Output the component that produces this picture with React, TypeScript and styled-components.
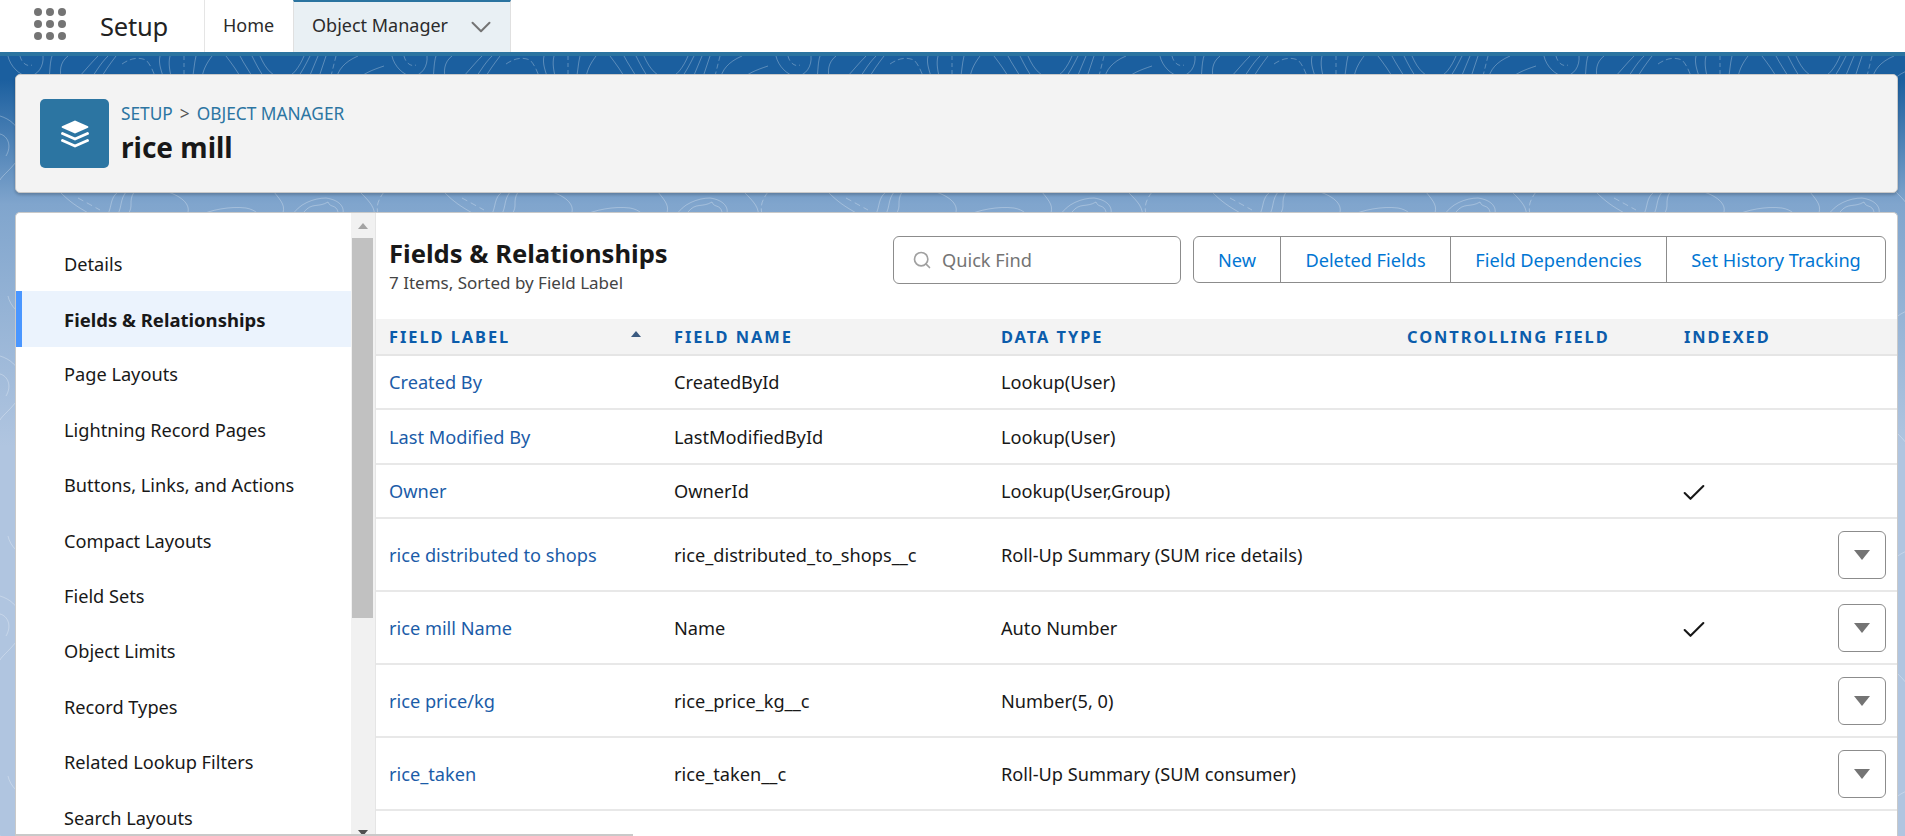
import React from "react";
import styled, { createGlobalStyle } from "styled-components";
import { Check, ChevronDown, Search } from "lucide-react";

const GlobalStyle = createGlobalStyle`
  html, body {
    margin: 0;
    padding: 0;
    height: 100%;
    overflow: hidden;
    background: #fff;
    font-family: "Noto Sans", "Open Sans", "Liberation Sans", sans-serif;
    color: #181818;
  }
  * {
    box-sizing: border-box;
  }
`;

const Page = styled.div`
  display: flex;
  flex-direction: column;
  height: 100vh;
  overflow: hidden;
`;

const TopBar = styled.header`
  display: flex;
  flex: none;
  height: 52px;
  background: #fff;
`;

const AppBlock = styled.div`
  display: flex;
  align-items: center;
  width: 205px;
  padding-left: 34px;
  border-right: 1px solid #e5e5e5;
`;

const Waffle = styled.div`
  display: grid;
  grid-template-columns: repeat(3, 8px);
  gap: 4px;
  margin: 0 34px 4px 0;
  span {
    width: 8px;
    height: 8px;
    border-radius: 50%;
    background: #747474;
  }
`;

const AppName = styled.div`
  font-size: 25.5px;
  color: #222;
  letter-spacing: -0.2px;
  margin-bottom: 1px;
`;

const Tab = styled.div<{ $active?: boolean }>`
  display: flex;
  align-items: center;
  padding: 0 18px 5px 18px;
  font-size: 18px;
  color: #2b2b2b;
  width: ${(p) => (p.$active ? "218px" : "88px")};
  background: ${(p) => (p.$active ? "#e9f0f4" : "#fff")};
  border-top: 2px solid ${(p) => (p.$active ? "#2b74a0" : "#fff")};
  border-right: ${(p) => (p.$active ? "1px solid #e0e0e0" : "none")};
  border-left: ${(p) => (p.$active ? "1px solid #e0e0e0" : "none")};
  white-space: nowrap;
  svg {
    margin-left: auto;
    margin-right: -6px;
    margin-top: 5px;
    color: #747474;
  }
`;

const Stage = styled.main`
  position: relative;
  flex: 1;
  min-height: 0;
  display: flex;
  flex-direction: column;
  gap: 19px;
  padding: 18px 7px 0 15px;
  border-top: 4px solid #2b74a0;
  background: linear-gradient(180deg, #1b5f9f 0%, #1b5f9f 3%, #80a5cd 19%, #b0c5e0 50%, #b0c5e0 100%);
`;

const Contours = styled.svg`
  position: absolute;
  inset: 0;
  width: 100%;
  height: 100%;
`;

const ObjectHeader = styled.section`
  position: relative;
  flex: none;
  display: flex;
  align-items: center;
  height: 119px;
  padding: 0 24px;
  gap: 12px;
  background: #f3f3f3;
  border: 1px solid #c9c9c9;
  border-radius: 5px;
  box-shadow: 0 2px 3px rgba(0, 0, 0, 0.2);
`;

const ObjectIcon = styled.div`
  display: flex;
  align-items: center;
  justify-content: center;
  width: 69px;
  height: 69px;
  border-radius: 5px;
  background: #2c75a2;
`;

const Breadcrumb = styled.div`
  display: flex;
  gap: 7px;
  font-size: 17.3px;
  color: #555;
  line-height: 24px;
  a {
    color: #2c75a2;
  }
`;

const ObjectTitle = styled.h1`
  margin: 3px 0 0;
  font-size: 28px;
  line-height: 36px;
  font-weight: 700;
`;

const Card = styled.section`
  position: relative;
  flex: 1;
  min-height: 0;
  display: flex;
  background: #fff;
  border: 1px solid #c9c9c9;
  border-bottom: none;
  border-radius: 5px 5px 0 0;
  overflow: hidden;
`;

const SideNav = styled.nav`
  flex: none;
  width: 335px;
  padding-top: 23px;
`;

const NavItem = styled.div<{ $active?: boolean }>`
  display: flex;
  align-items: center;
  height: 55.4px;
  padding-left: ${(p) => (p.$active ? "42px" : "48px")};
  font-size: ${(p) => (p.$active ? "18.5px" : "18.2px")};
  font-weight: ${(p) => (p.$active ? 700 : 400)};
  color: #181818;
  background: ${(p) => (p.$active ? "#ebf3fd" : "transparent")};
  border-left: ${(p) => (p.$active ? "6px solid #4a96ff" : "none")};
`;

const ScrollTrack = styled.div`
  flex: none;
  width: 25px;
  position: relative;
  background: #f1f1f1;
  border-right: 1px solid #e5e5e5;
`;

const ScrollThumb = styled.div`
  width: 21px;
  height: 380px;
  margin: 25px 0 0 1px;
  background: #c1c1c1;
`;

const ScrollArrow = styled.span<{ $down?: boolean }>`
  position: absolute;
  left: 7px;
  width: 0;
  height: 0;
  border-left: 5px solid transparent;
  border-right: 5px solid transparent;
  ${(p) =>
    p.$down
      ? "bottom: 0; border-top: 6px solid #505050;"
      : "top: 10px; border-bottom: 6px solid #a3a3a3;"}
`;

const Content = styled.div`
  flex: 1;
  min-width: 0;
  display: flex;
  flex-direction: column;
`;

const ContentHead = styled.div`
  flex: none;
  display: flex;
  height: 106px;
  padding: 23px 11px 0 13px;
`;

const HeadText = styled.div`
  flex: 1;
`;

const SectionTitle = styled.h2`
  margin: 0;
  font-size: 25.6px;
  line-height: 35px;
  font-weight: 700;
`;

const SectionMeta = styled.div`
  font-size: 17px;
  line-height: 22px;
  color: #444;
  margin-top: 1px;
`;

const QuickFind = styled.div`
  display: flex;
  align-items: center;
  width: 288px;
  height: 48px;
  margin-right: 12px;
  padding-left: 18px;
  gap: 10px;
  font-size: 18.2px;
  color: #747474;
  border: 1px solid #8c8c8c;
  border-radius: 6px;
  svg {
    color: #a0a0a0;
  }
`;

const ButtonGroup = styled.div`
  display: flex;
  height: 47px;
  border: 1px solid #8c8c8c;
  border-radius: 6px;
`;

const GroupButton = styled.div<{ $w: number }>`
  display: flex;
  align-items: center;
  justify-content: center;
  width: ${(p) => p.$w}px;
  font-size: 18.2px;
  color: #0176d3;
  border-right: 1px solid #8c8c8c;
  &:last-child {
    border-right: none;
  }
`;

const COLUMNS = "285px 327px 406px 277px 1fr 59px";

const HeadRow = styled.div`
  flex: none;
  position: relative;
  display: grid;
  grid-template-columns: ${COLUMNS};
  align-items: center;
  height: 37px;
  background: #f3f3f3;
  border-bottom: 2px solid #e5e5e5;
`;

const HeadCell = styled.div`
  padding-left: 13px;
  font-size: 16.4px;
  font-weight: 700;
  letter-spacing: 1.95px;
  color: #0b5cab;
  white-space: nowrap;
`;

const SortArrow = styled.span`
  position: absolute;
  left: 255px;
  top: 12px;
  width: 0;
  height: 0;
  border-left: 5px solid transparent;
  border-right: 5px solid transparent;
  border-bottom: 6px solid #3a5a80;
`;

const Row = styled.div<{ $tall?: boolean }>`
  flex: none;
  display: grid;
  grid-template-columns: ${COLUMNS};
  align-items: center;
  height: ${(p) => (p.$tall ? "73px" : "54.4px")};
  border-bottom: 2px solid #e8e8e8;
`;

const Cell = styled.div`
  padding-left: 13px;
  font-size: 18.2px;
  color: #181818;
  white-space: nowrap;
`;

const FieldLink = styled(Cell)`
  color: #1b5ca8;
`;

const MarkCell = styled(Cell)`
  display: flex;
  align-items: center;
  svg {
    margin: 4px 0 0 -4px;
  }
`;

const RowAction = styled.div`
  display: flex;
  align-items: center;
  justify-content: center;
  width: 48px;
  height: 48px;
  border: 1px solid #8c8c8c;
  border-radius: 6px;
  &::before {
    content: "";
    border-left: 8px solid transparent;
    border-right: 8px solid transparent;
    border-top: 10px solid #747474;
  }
`;

const ScrollFoot = styled.div`
  position: absolute;
  left: 0;
  bottom: 0;
  width: 617px;
  height: 2px;
  background: #c9c9c9;
`;

const navItems = [
  "Details",
  "Fields & Relationships",
  "Page Layouts",
  "Lightning Record Pages",
  "Buttons, Links, and Actions",
  "Compact Layouts",
  "Field Sets",
  "Object Limits",
  "Record Types",
  "Related Lookup Filters",
  "Search Layouts",
];

const fields = [
  { label: "Created By", name: "CreatedById", type: "Lookup(User)" },
  { label: "Last Modified By", name: "LastModifiedById", type: "Lookup(User)" },
  { label: "Owner", name: "OwnerId", type: "Lookup(User,Group)", indexed: true },
  { label: "rice distributed to shops", name: "rice_distributed_to_shops__c", type: "Roll-Up Summary (SUM rice details)", action: true },
  { label: "rice mill Name", name: "Name", type: "Auto Number", indexed: true, action: true },
  { label: "rice price/kg", name: "rice_price_kg__c", type: "Number(5, 0)", action: true },
  { label: "rice_taken", name: "rice_taken__c", type: "Roll-Up Summary (SUM consumer)", action: true },
];

const StackIcon = () => (
  <svg width="28" height="28" viewBox="0 0 28 28" fill="none">
    <path d="M14 0.5 L27 6.2 Q28 7 27 7.8 L14 13.5 L1 7.8 Q0 7 1 6.2 Z" fill="#fff" />
    <path d="M1.5 13.5 L14 19 L26.5 13.5" stroke="#fff" strokeWidth="2.8" strokeLinecap="round" strokeLinejoin="round" />
    <path d="M1.5 20.5 L14 26 L26.5 20.5" stroke="#fff" strokeWidth="2.8" strokeLinecap="round" strokeLinejoin="round" />
  </svg>
);

const ContourLines = () => (
  <Contours aria-hidden="true">
    <defs>
      <pattern id="topo" width="384" height="240" patternUnits="userSpaceOnUse">
        <g fill="none" stroke="#fff" strokeOpacity="0.28" strokeWidth="1">
          <path d="M8 0 C10 10 20 20 28 20 C38 20 44 10 43 0" />
          <path d="M20 0 C22 8 28 11 32 9" strokeDasharray="5 3" />
          <path d="M52 0 C50 6 50 14 49 24" />
          <path d="M68 0 C60 6 59 16 62 24" />
          <path d="M98 0 C90 8 84 16 76 24" />
          <path d="M108 0 C100 8 96 16 90 24" />
          <path d="M116 0 C110 8 104 16 100 24" />
          <path d="M122 8 C128 4 136 0 146 4 C150 8 154 16 156 24" strokeDasharray="6 3" />
          <path d="M160 0 C158 8 162 16 164 24" />
          <path d="M170 0 C168 8 170 16 172 24" />
          <path d="M184 0 L184 24" strokeDasharray="4 3" />
          <path d="M196 0 C194 8 194 16 192 24" />
          <path d="M212 0 C206 8 202 16 202 24" />
          <path d="M226 0 C232 8 238 16 242 24" />
          <path d="M240 0 C244 8 250 16 254 24" />
          <path d="M252 0 C256 8 260 16 266 24" />
          <path d="M260 0 C266 14 274 22 284 22 C292 22 300 10 304 0" />
          <path d="M310 0 C306 8 302 16 296 24" />
          <path d="M318 0 L308 24" />
          <path d="M326 0 L318 24" />
          <path d="M336 0 L330 24" strokeDasharray="5 3" />
          <path d="M358 0 C344 6 338 14 336 24" />
          <path d="M384 10 C372 14 362 18 358 24" />
          <path d="M0 60 C20 66 28 86 16 106 C8 116 2 120 0 124" />
          <path d="M0 78 C8 80 12 90 6 100" />
          <path d="M60 136 C70 146 76 150 90 158" />
          <path d="M78 142 L100 154" strokeDasharray="6 4" />
          <path d="M118 136 C110 142 112 150 108 158" />
          <path d="M126 136 C120 144 122 150 118 158" />
          <path d="M134 136 C128 146 134 150 128 158" />
          <path d="M168 136 C186 142 192 152 186 160" />
          <path d="M198 160 C210 154 230 150 246 152 C256 154 258 158 262 162" />
          <path d="M274 136 C282 146 286 150 282 160" />
          <path d="M292 160 C298 148 314 142 326 142 C340 144 346 152 342 160" />
          <path d="M304 156 C312 146 318 152 328 146 C330 152 336 148 338 156" />
          <path d="M360 136 C370 146 376 152 374 162" />
          <path d="M384 136 C378 144 376 150 378 158" strokeDasharray="6 3" />
        </g>
      </pattern>
    </defs>
    <rect width="100%" height="100%" fill="url(#topo)" />
  </Contours>
);

export default function App() {
  return (
    <Page>
      <GlobalStyle />
      <TopBar>
        <AppBlock>
          <Waffle>
            {Array.from({ length: 9 }).map((_, i) => (
              <span key={i} />
            ))}
          </Waffle>
          <AppName>Setup</AppName>
        </AppBlock>
        <Tab>Home</Tab>
        <Tab $active>
          Object Manager
          <ChevronDown size={34} strokeWidth={1.4} />
        </Tab>
      </TopBar>
      <Stage>
        <ContourLines />
        <ObjectHeader>
          <ObjectIcon>
            <StackIcon />
          </ObjectIcon>
          <div>
            <Breadcrumb>
              <a>SETUP</a>
              <span>&gt;</span>
              <a>OBJECT MANAGER</a>
            </Breadcrumb>
            <ObjectTitle>rice mill</ObjectTitle>
          </div>
        </ObjectHeader>
        <Card>
          <SideNav>
            {navItems.map((item) => (
              <NavItem key={item} $active={item === "Fields & Relationships"}>
                {item}
              </NavItem>
            ))}
          </SideNav>
          <ScrollTrack>
            <ScrollArrow />
            <ScrollThumb />
            <ScrollArrow $down />
          </ScrollTrack>
          <Content>
            <ContentHead>
              <HeadText>
                <SectionTitle>Fields &amp; Relationships</SectionTitle>
                <SectionMeta>7 Items, Sorted by Field Label</SectionMeta>
              </HeadText>
              <QuickFind>
                <Search size={20} strokeWidth={2} />
                Quick Find
              </QuickFind>
              <ButtonGroup>
                <GroupButton $w={87}>New</GroupButton>
                <GroupButton $w={170}>Deleted Fields</GroupButton>
                <GroupButton $w={216}>Field Dependencies</GroupButton>
                <GroupButton $w={218}>Set History Tracking</GroupButton>
              </ButtonGroup>
            </ContentHead>
            <HeadRow>
              <HeadCell>FIELD LABEL</HeadCell>
              <HeadCell>FIELD NAME</HeadCell>
              <HeadCell>DATA TYPE</HeadCell>
              <HeadCell>CONTROLLING FIELD</HeadCell>
              <HeadCell>INDEXED</HeadCell>
              <SortArrow />
            </HeadRow>
            {fields.map((f) => (
              <Row key={f.label} $tall={f.action}>
                <FieldLink>{f.label}</FieldLink>
                <Cell>{f.name}</Cell>
                <Cell>{f.type}</Cell>
                <Cell />
                <MarkCell>{f.indexed && <Check size={28} strokeWidth={1.8} />}</MarkCell>
                <div>{f.action && <RowAction />}</div>
              </Row>
            ))}
          </Content>
          <ScrollFoot />
        </Card>
      </Stage>
    </Page>
  );
}
